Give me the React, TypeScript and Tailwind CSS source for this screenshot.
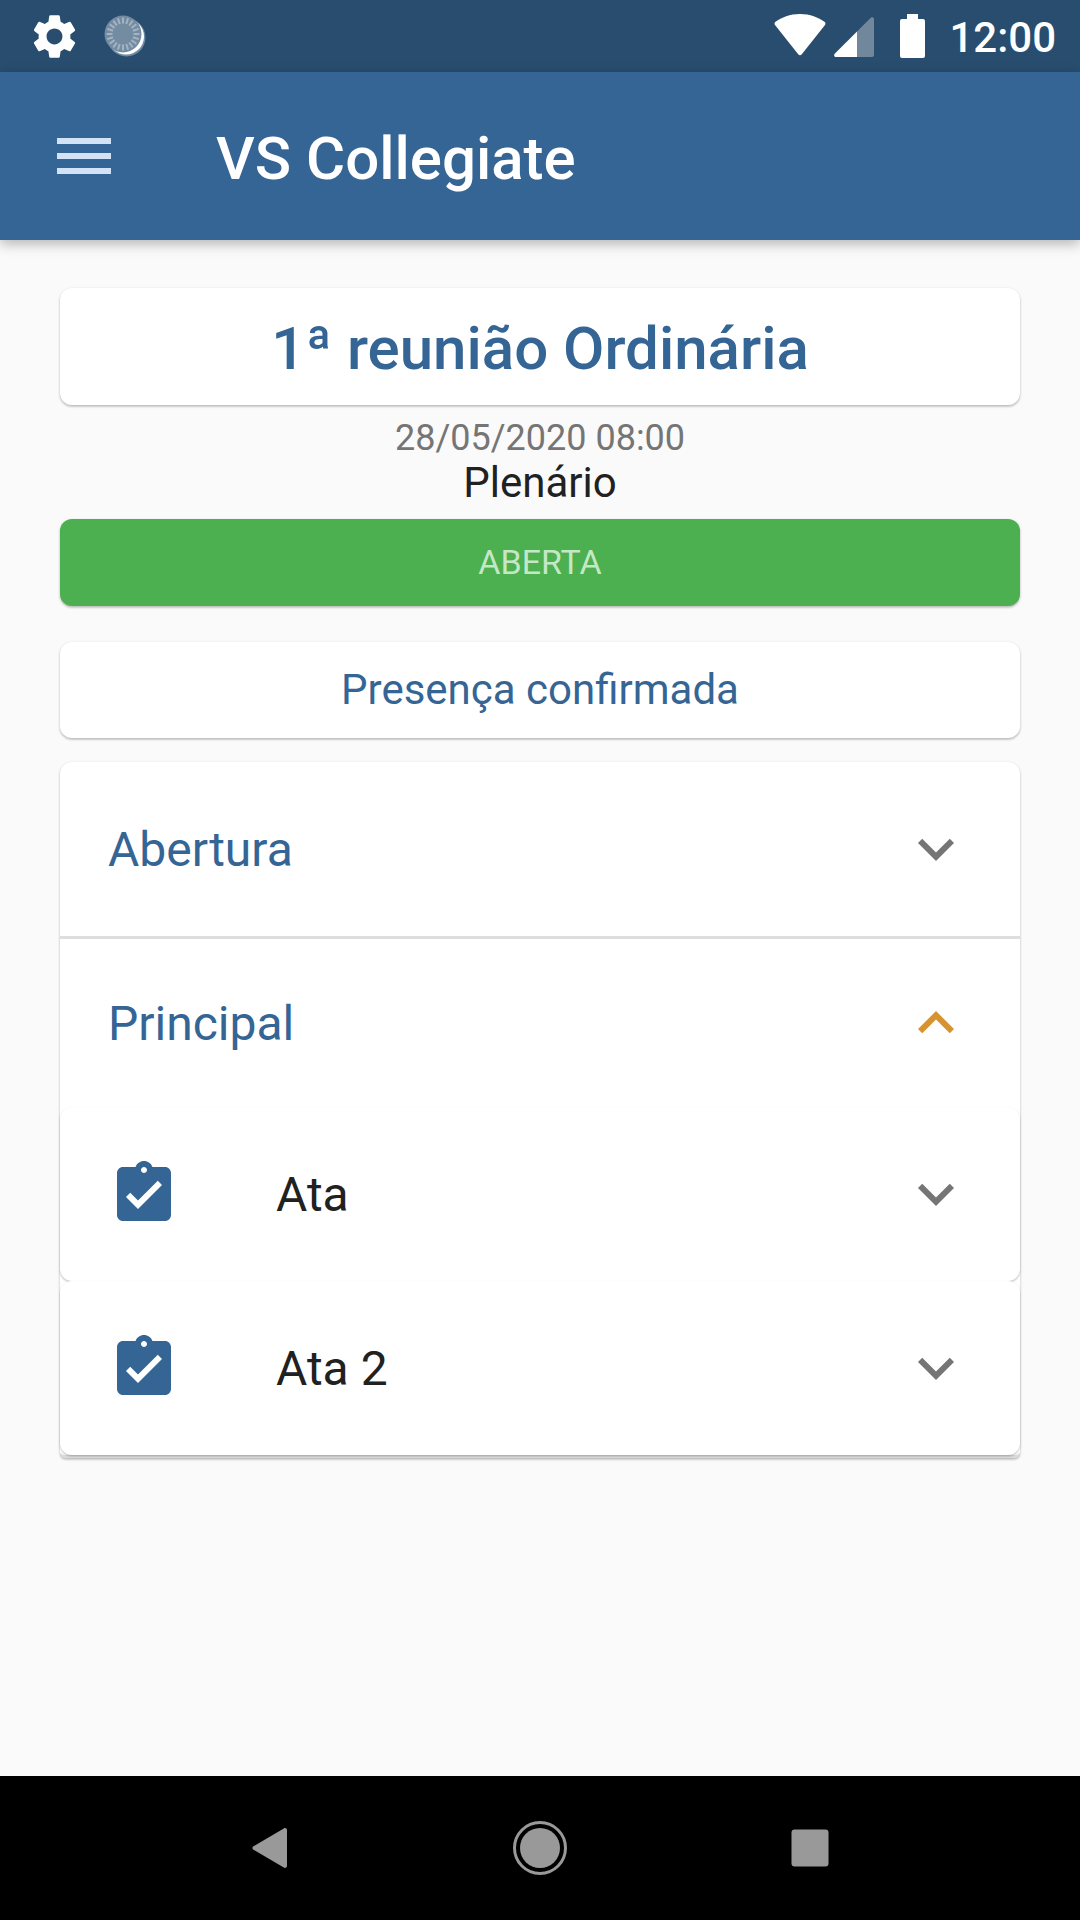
import type { ReactNode } from "react";
import { useState } from "react";
import {
  MdAssignmentTurnedIn,
  MdExpandLess,
  MdExpandMore,
  MdMenu,
  MdSettings,
} from "react-icons/md";

const cardClassName =
  "w-full rounded-xl shadow-[0_1px_3px_rgba(0,0,0,0.2),0_2px_2px_rgba(0,0,0,0.1)]";

const agendaClassName =
  "mt-6 w-full rounded-t-xl rounded-b-md border-b-3 border-[#dcdcdc] bg-white shadow-[0_1px_3px_rgba(0,0,0,0.2),0_2px_2px_rgba(0,0,0,0.1)]";

const topicClassName =
  "rounded-xl bg-white shadow-[0_1px_2px_rgba(0,0,0,0.18),0_2px_2px_rgba(0,0,0,0.08)]";

const topics = [
  { id: "ata-1", title: "Ata" },
  { id: "ata-2", title: "Ata 2" },
];

const spinnerTicks = Array.from({ length: 20 }, (_, i) => i * 18);

function SpinnerIcon() {
  return (
    <svg viewBox="0 0 48 48" className="size-12" aria-hidden="true">
      <circle cx="25.500" cy="25.500" r="19" fill="#fff" fillOpacity="0.35" />
      <circle cx="25" cy="24.500" r="18" fill="#fff" />
      <circle cx="22" cy="22" r="18.500" fill="#748ca2" />
      {spinnerTicks.map((angle) => (
        <path
          key={angle}
          d="M22 5.500v6"
          stroke="#a3b3c2"
          strokeWidth="2"
          transform={`rotate(${angle} 22 22)`}
        />
      ))}
    </svg>
  );
}

function WifiIcon() {
  return (
    <svg viewBox="0 0 52 44" className="h-11 w-[52px]" aria-hidden="true">
      <path
        d="M26 0C16 0 7.500 3.500 1.500 7.800.4 8.700.2 10 1 11l23.200 29.300c1 1.200 2.600 1.200 3.600 0L51 11c.8-1 .6-2.300-.5-3.200C44.500 3.500 36 0 26 0Z"
        fill="#fff"
      />
    </svg>
  );
}

function SignalIcon() {
  return (
    <svg viewBox="0 0 40 44" className="h-11 w-10" aria-hidden="true">
      <path d="M23 17.500 36.800 3.700C38 2.700 40 3.300 40 5v36a2 2 0 0 1-2 2H23Z" fill="#71879b" />
      <path d="M23 17.500V43H2C.3 43-.5 41 .7 39.800Z" fill="#fff" />
    </svg>
  );
}

function BatteryIcon() {
  return (
    <svg viewBox="0 0 25 44" className="h-11 w-[25px]" aria-hidden="true">
      <path
        d="M7 0h11v5h5a2 2 0 0 1 2 2v35a2 2 0 0 1-2 2H2a2 2 0 0 1-2-2V7a2 2 0 0 1 2-2h5Z"
        fill="#fff"
      />
    </svg>
  );
}

function StatusBar() {
  return (
    <div className="flex h-[72px] items-center justify-between bg-[#284d6e] pr-6 pl-7 text-white">
      <div className="flex items-center gap-5">
        <MdSettings className="size-[53px]" aria-hidden="true" />
        <SpinnerIcon />
      </div>
      <div className="flex items-center">
        <WifiIcon />
        <div className="ml-2">
          <SignalIcon />
        </div>
        <div className="ml-[26px]">
          <BatteryIcon />
        </div>
        <span className="ml-6 pt-1 text-[42px] leading-[48px] font-medium">12:00</span>
      </div>
    </div>
  );
}

function AppBar() {
  return (
    <header className="relative flex h-[168px] items-center bg-[#356595] pl-12 text-white shadow-[0_4px_12px_rgba(0,0,0,0.28)]">
      <button type="button" aria-label="Menu" className="text-[#d2e3f8]">
        <MdMenu className="size-[72px]" />
      </button>
      <h1 className="ml-24 pt-1 text-[60px] leading-[73px] font-medium">VS Collegiate</h1>
    </header>
  );
}

function Row({
  title,
  icon,
  open,
  className,
  onClick,
}: {
  title: string;
  icon?: ReactNode;
  open: boolean;
  className: string;
  onClick: () => void;
}) {
  return (
    <button
      type="button"
      aria-expanded={open}
      onClick={onClick}
      className={`flex w-full items-center px-12 text-left text-[48px] leading-[57px] ${className}`}
    >
      {icon}
      <span className="flex-1">{title}</span>
      {open ? (
        <MdExpandLess className="size-[72px] text-[#d8922e]" />
      ) : (
        <MdExpandMore className="size-[72px] text-[#757575]" />
      )}
    </button>
  );
}

function Agenda() {
  const [openingOpen, setOpeningOpen] = useState(false);
  const [mainOpen, setMainOpen] = useState(true);
  const [openTopic, setOpenTopic] = useState("");

  return (
    <section className={agendaClassName}>
      <Row
        title="Abertura"
        open={openingOpen}
        onClick={() => setOpeningOpen(!openingOpen)}
        className="h-[174px] text-[#356595]"
      />
      <div className="border-t-3 border-[#dedede]">
        <Row
          title="Principal"
          open={mainOpen}
          onClick={() => setMainOpen(!mainOpen)}
          className="h-[168px] text-[#356595]"
        />
      </div>
      {mainOpen
        ? topics.map((topic) => (
            <div key={topic.id} className={topicClassName}>
              <Row
                title={topic.title}
                icon={
                  <MdAssignmentTurnedIn className="mr-24 size-[72px] text-[#356595]" />
                }
                open={openTopic === topic.id}
                onClick={() => setOpenTopic(openTopic === topic.id ? "" : topic.id)}
                className="h-[174px] text-[#212121]"
              />
            </div>
          ))
        : null}
    </section>
  );
}

function NavBar() {
  return (
    <nav className="grid h-36 grid-cols-3 items-center justify-items-center bg-black px-[12.5%]">
      <button type="button" aria-label="Back">
        <svg viewBox="0 0 54 54" className="size-[54px]">
          <path
            d="M10.500 25.200 40.800 7.400c1.500-.8 3.200 0 3.200 1.800v35.600c0 1.800-1.700 2.600-3.200 1.800L10.500 28.800c-1.500-1-1.500-2.600 0-3.600Z"
            fill="#999"
          />
        </svg>
      </button>
      <button type="button" aria-label="Home">
        <svg viewBox="0 0 54 54" className="size-[54px]">
          <circle cx="27" cy="27" r="25.500" fill="none" stroke="#999" strokeWidth="3" />
          <circle cx="27" cy="27" r="20" fill="#999" />
        </svg>
      </button>
      <button type="button" aria-label="Recent apps">
        <svg viewBox="0 0 54 54" className="size-[54px]">
          <rect x="8.500" y="8.500" width="37" height="37" rx="3" fill="#999" />
        </svg>
      </button>
    </nav>
  );
}

export default function App() {
  return (
    <div className="flex min-h-screen flex-col bg-[#fafafa] font-[Roboto,sans-serif]">
      <StatusBar />
      <AppBar />
      <main className="flex flex-1 flex-col items-center px-[60px] pt-12 text-center">
        <h2
          className={`${cardClassName} bg-white pt-6 pb-5 text-[60px] leading-[73px] font-medium text-[#356595]`}
        >
          1ª reunião Ordinária
        </h2>
        <p className="mt-3 text-[36px] leading-[42px] text-[#757575]">28/05/2020 08:00</p>
        <p className="text-[42px] leading-[48px] text-[#212121]">Plenário</p>
        <p
          className={`${cardClassName} mt-3 bg-[#4caf50] py-6 text-[34px] leading-[39px] text-[#c4e8c6]`}
        >
          ABERTA
        </p>
        <p
          className={`${cardClassName} mt-9 bg-white py-6 text-[42px] leading-[48px] text-[#356595]`}
        >
          Presença confirmada
        </p>
        <Agenda />
      </main>
      <NavBar />
    </div>
  );
}
